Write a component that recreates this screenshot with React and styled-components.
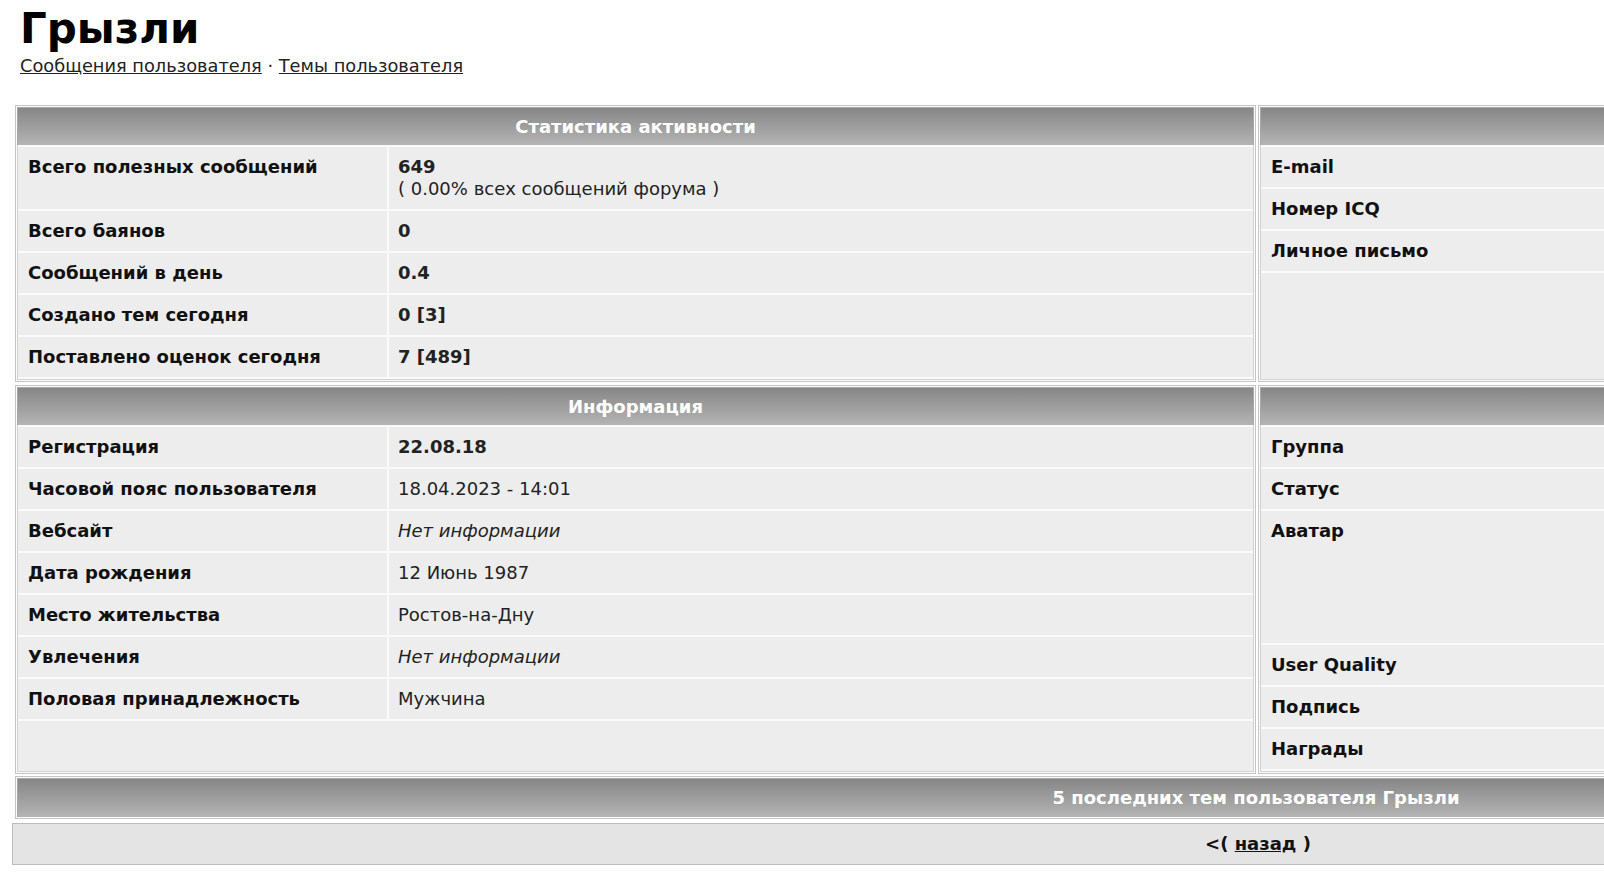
import React from 'react';
import styled, { createGlobalStyle } from 'styled-components';

const GlobalStyle = createGlobalStyle`
  html, body {
    margin: 0;
    padding: 0;
    background: #fff;
    overflow: hidden;
  }
  body {
    font-family: "DejaVu Sans", Verdana, sans-serif;
    color: #111;
  }
`;

const Page = styled.div`
  width: 2492px;
  padding: 2px 0 20px 12px;
`;

const Title = styled.h1`
  margin: 0 0 0 8px;
  padding: 3px 0 2px;
  font-size: 42px;
  line-height: 48px;
  font-weight: bold;
  color: #000;
`;

const Links = styled.div`
  margin-left: 8px;
  font-size: 17.8px;
  line-height: 22px;
  color: #222;

  a {
    color: #222;
    text-decoration: underline;
  }
`;

const Columns = styled.div`
  display: grid;
  grid-template-columns: 1241px 1241px;
  gap: 3px 2px;
  margin: 28px 0 0 3px;
`;

const Panel = styled.div`
  display: flex;
  flex-direction: column;
  border: 1px solid #c4c4c4;
  padding: 1px;
  background: #fbfbfb;
  margin: ${(p) => (p.$wide ? '2px 0 0 3px' : '0')};
  width: ${(p) => (p.$wide ? '2482px' : 'auto')};
  box-sizing: border-box;
`;

const PanelHead = styled.div`
  height: ${(p) => (p.$tall ? '38px' : '37px')};
  line-height: ${(p) => (p.$tall ? '38px' : '37px')};
  border: 1px solid #a8a8a8;
  border-bottom: none;
  background: linear-gradient(#878787, #b4b4b4);
  color: #fff;
  font-size: 18px;
  font-weight: bold;
  text-align: center;
`;

const Rows = styled.div`
  flex: 1;
  display: flex;
  flex-direction: column;
  gap: 2px;
  padding-top: 2px;
  background: #fafafa;
  border: 1px solid #d2d2d2;
  border-top: none;
`;

const Row = styled.div`
  display: grid;
  grid-template-columns: 369px 1fr;
  gap: 2px;
  min-height: ${(p) => (p.$tall ? '132px' : '40px')};
`;

const Label = styled.div`
  background: #ededed;
  padding: 9px 10px;
  font-size: 18px;
  line-height: 22px;
  font-weight: bold;
  color: #111;
`;

const Value = styled.div`
  background: #ededed;
  padding: 9px 9px;
  font-size: 18px;
  line-height: 22px;
  color: #222;
  font-weight: ${(p) => (p.$bold ? 'bold' : 'normal')};
  font-style: ${(p) => (p.$muted ? 'italic' : 'normal')};
`;

const Note = styled.div`
  font-weight: normal;
`;

const Filler = styled.div`
  flex: 1;
  background: #ededed;
`;

const Footer = styled.div`
  margin-top: 4px;
  height: 40px;
  line-height: 40px;
  border: 1px solid #bcbcbc;
  background: #e4e4e4;
  text-align: center;
  font-size: 18px;
  font-weight: bold;
  color: #111;

  a {
    color: #111;
    text-decoration: underline;
  }
`;

const stats = [
  { label: 'Всего полезных сообщений', value: '649', note: '( 0.00% всех сообщений форума )', bold: true },
  { label: 'Всего баянов', value: '0', bold: true },
  { label: 'Сообщений в день', value: '0.4', bold: true },
  { label: 'Создано тем сегодня', value: '0 [3]', bold: true },
  { label: 'Поставлено оценок сегодня', value: '7 [489]', bold: true },
];

const info = [
  { label: 'Регистрация', value: '22.08.18', bold: true },
  { label: 'Часовой пояс пользователя', value: '18.04.2023 - 14:01' },
  { label: 'Вебсайт', value: 'Нет информации', muted: true },
  { label: 'Дата рождения', value: '12 Июнь 1987' },
  { label: 'Место жительства', value: 'Ростов-на-Дну' },
  { label: 'Увлечения', value: 'Нет информации', muted: true },
  { label: 'Половая принадлежность', value: 'Мужчина' },
];

const contacts = ['E-mail', 'Номер ICQ', 'Личное письмо'];

const profile = [
  { label: 'Группа' },
  { label: 'Статус' },
  { label: 'Аватар', tall: true },
  { label: 'User Quality' },
  { label: 'Подпись' },
  { label: 'Награды' },
];

const InfoRows = ({ items }) => (
  <Rows>
    {items.map((item) => (
      <Row key={item.label} $tall={item.tall}>
        <Label>{item.label}</Label>
        <Value $bold={item.bold} $muted={item.muted}>
          {item.value}
          {item.note && <Note>{item.note}</Note>}
        </Value>
      </Row>
    ))}
    <Filler />
  </Rows>
);

const App = () => (
  <>
    <GlobalStyle />
    <Page>
      <Title>Грызли</Title>
      <Links>
        <a href="#posts">Сообщения пользователя</a> · <a href="#topics">Темы пользователя</a>
      </Links>

      <Columns>
        <Panel>
          <PanelHead>Статистика активности</PanelHead>
          <InfoRows items={stats} />
        </Panel>
        <Panel>
          <PanelHead>&nbsp;</PanelHead>
          <InfoRows items={contacts.map((label) => ({ label }))} />
        </Panel>
        <Panel>
          <PanelHead>Информация</PanelHead>
          <InfoRows items={info} />
        </Panel>
        <Panel>
          <PanelHead>&nbsp;</PanelHead>
          <InfoRows items={profile} />
        </Panel>
      </Columns>

      <Panel $wide>
        <PanelHead $tall>5 последних тем пользователя Грызли</PanelHead>
      </Panel>

      <Footer>
        &lt;( <a href="#back">назад</a> )
      </Footer>
    </Page>
  </>
);

export default App;
